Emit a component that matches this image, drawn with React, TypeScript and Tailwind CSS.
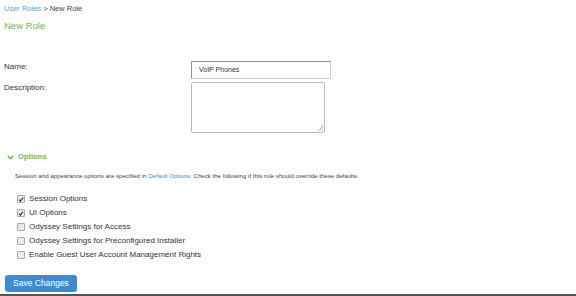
import { ChevronDown } from "lucide-react";

const options = [
  { label: "Session Options", checked: true },
  { label: "UI Options", checked: true },
  { label: "Odyssey Settings for Access", checked: false },
  { label: "Odyssey Settings for Preconfigured Installer", checked: false },
  { label: "Enable Guest User Account Management Rights", checked: false },
];

function Box({ checked }: { checked: boolean }) {
  return (
    <span className="flex h-[8px] w-[8px] items-center justify-center rounded-[1px] border border-[#a9a9a9] bg-[#ececec]">
      {checked && (
        <svg width="7" height="7" viewBox="0 0 8 8">
          <path d="M1.3 4.2 L3.2 6.2 L6.8 1.6" fill="none" stroke="#333" strokeWidth="1.5" />
        </svg>
      )}
    </span>
  );
}

export default function App() {
  return (
    <main className="h-[296px] w-[576px] overflow-hidden bg-white font-['Liberation_Sans',Arial,sans-serif] text-[#333]">
      <div className="px-[4px] pt-[3px]">
        {/* breadcrumb */}
        <div className="text-[7.5px] leading-[12px]">
          <span className="text-[#6b9fd6]">User Roles</span>
          <span className="text-[#444]"> &gt; New Role</span>
        </div>
        <h1 className="mt-[4px] text-[9.5px] leading-[14px] text-[#6cbd45]">New Role</h1>

        {/* Name */}
        <div className="mt-[28px] grid grid-cols-[187px_auto] items-start">
          <label className="text-[8px] leading-[12px]">Name:</label>
          <div className="flex h-[18px] w-[140px] items-center border border-[#d2d2d2] border-l-[#8f8f8f] border-t-[#8f8f8f] pl-[7px] text-[7px]">
            VoIP Phones
          </div>
        </div>

        {/* Description */}
        <div className="mt-[3px] grid grid-cols-[187px_auto] items-start">
          <label className="text-[8px] leading-[12px]">Description:</label>
          <div className="relative h-[51px] w-[134px] rounded-[2px] border border-[#b9b9b9]">
            <svg className="absolute bottom-[1px] right-[1px]" width="5" height="5" viewBox="0 0 5 5">
              <path d="M0 5 L5 0 M2.5 5 L5 2.5" stroke="#999" strokeWidth="0.8" />
            </svg>
          </div>
        </div>

        {/* Options */}
        <div className="mt-[18px] flex items-center gap-[3px] pl-[2px] text-[7.5px] font-bold leading-[12px] text-[#6cbd45]">
          <ChevronDown size={9} strokeWidth={4} />
          <span>Options</span>
        </div>
        <p className="mt-[8px] pl-[11px] text-[6.1px] leading-[10px] text-[#444]">
          Session and appearance options are specified in{" "}
          <span className="text-[#3b8ddc]">Default Options</span>. Check the following if this role should override these defaults.
        </p>

        <div className="mt-[11px] flex flex-col pl-[13px]">
          {options.map((o) => (
            <div key={o.label} className="flex h-[14px] items-center gap-[4px] text-[8px]">
              <Box checked={o.checked} />
              <span>{o.label}</span>
            </div>
          ))}
        </div>

        <button className="ml-[1px] mt-[13px] flex h-[17px] w-[72px] items-center justify-center rounded-[3px] bg-[#3d8cd2] text-[8.5px] text-white">
          Save Changes
        </button>
      </div>
      <div className="mt-[2px] h-[2px] w-full bg-[#555]" />
    </main>
  );
}
